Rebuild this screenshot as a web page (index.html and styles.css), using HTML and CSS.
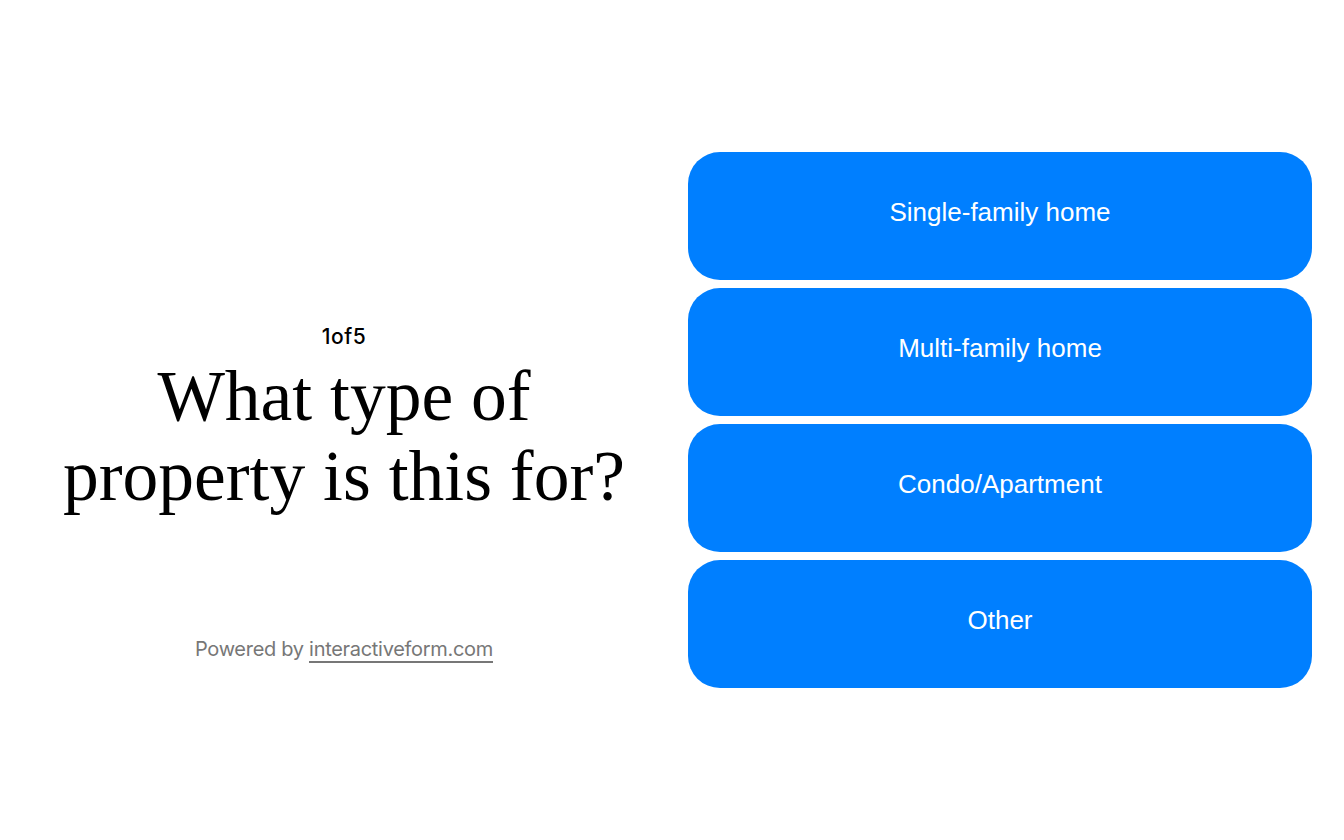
FILE: index.html
```html
<!DOCTYPE html>
<html lang="en">
<head>
    <meta charset="UTF-8">
    <meta name="viewport" content="width=device-width, initial-scale=1.0">
    <title>What type of property is this for?</title>
    <link rel="stylesheet" href="styles.css">
</head>
<body>
    <main class="page">
        <section class="intro">
            <div class="step">1of5</div>
            <h1 class="question">What type of property is this for?</h1>
            <p class="powered">Powered by <a href="#" class="powered-link">interactiveform.com</a></p>
        </section>

        <section class="options">
            <button type="button" class="option">Single-family home</button>
            <button type="button" class="option">Multi-family home</button>
            <button type="button" class="option">Condo/Apartment</button>
            <button type="button" class="option">Other</button>
        </section>
    </main>
</body>
</html>
```

FILE: styles.css
```css
body {
    margin: 0;
    background: #fff;
    font-family: "Liberation Sans", Arial, sans-serif;
}
.page {
    display: flex;
    align-items: center;
    height: 840px;
    padding-right: 32px;
    box-sizing: border-box;
}
.intro {
    width: 688px;
    flex-shrink: 0;
    display: flex;
    flex-direction: column;
    align-items: center;
    text-align: center;
    padding-top: 147px;
}
.step {
    font-family: Inter, sans-serif;
    font-size: 21px;
    font-weight: 500;
    line-height: 22px;
    letter-spacing: 0.6px;
    color: #000;
}
.question {
    margin: 8px 0 0;
    width: 600px;
    font-family: "Liberation Serif", "Times New Roman", serif;
    font-weight: normal;
    font-size: 71.5px;
    line-height: 80px;
    color: #000;
}
.powered {
    margin: 121px 0 0;
    font-family: Inter, sans-serif;
    font-size: 20px;
    line-height: 24px;
    letter-spacing: -0.3px;
    color: #777;
}
.powered-link {
    color: #777;
    text-decoration: none;
    border-bottom: 2px solid #777;
}
.options {
    flex: 1;
    display: flex;
    flex-direction: column;
    gap: 8px;
}
.option {
    height: 128px;
    padding: 0 0 7px;
    border: none;
    border-radius: 32px;
    background: #007fff;
    color: #fff;
    font-family: "Liberation Sans", Arial, sans-serif;
    font-size: 26px;
    cursor: pointer;
}
.option:hover {
    background: #0070e0;
}
```
